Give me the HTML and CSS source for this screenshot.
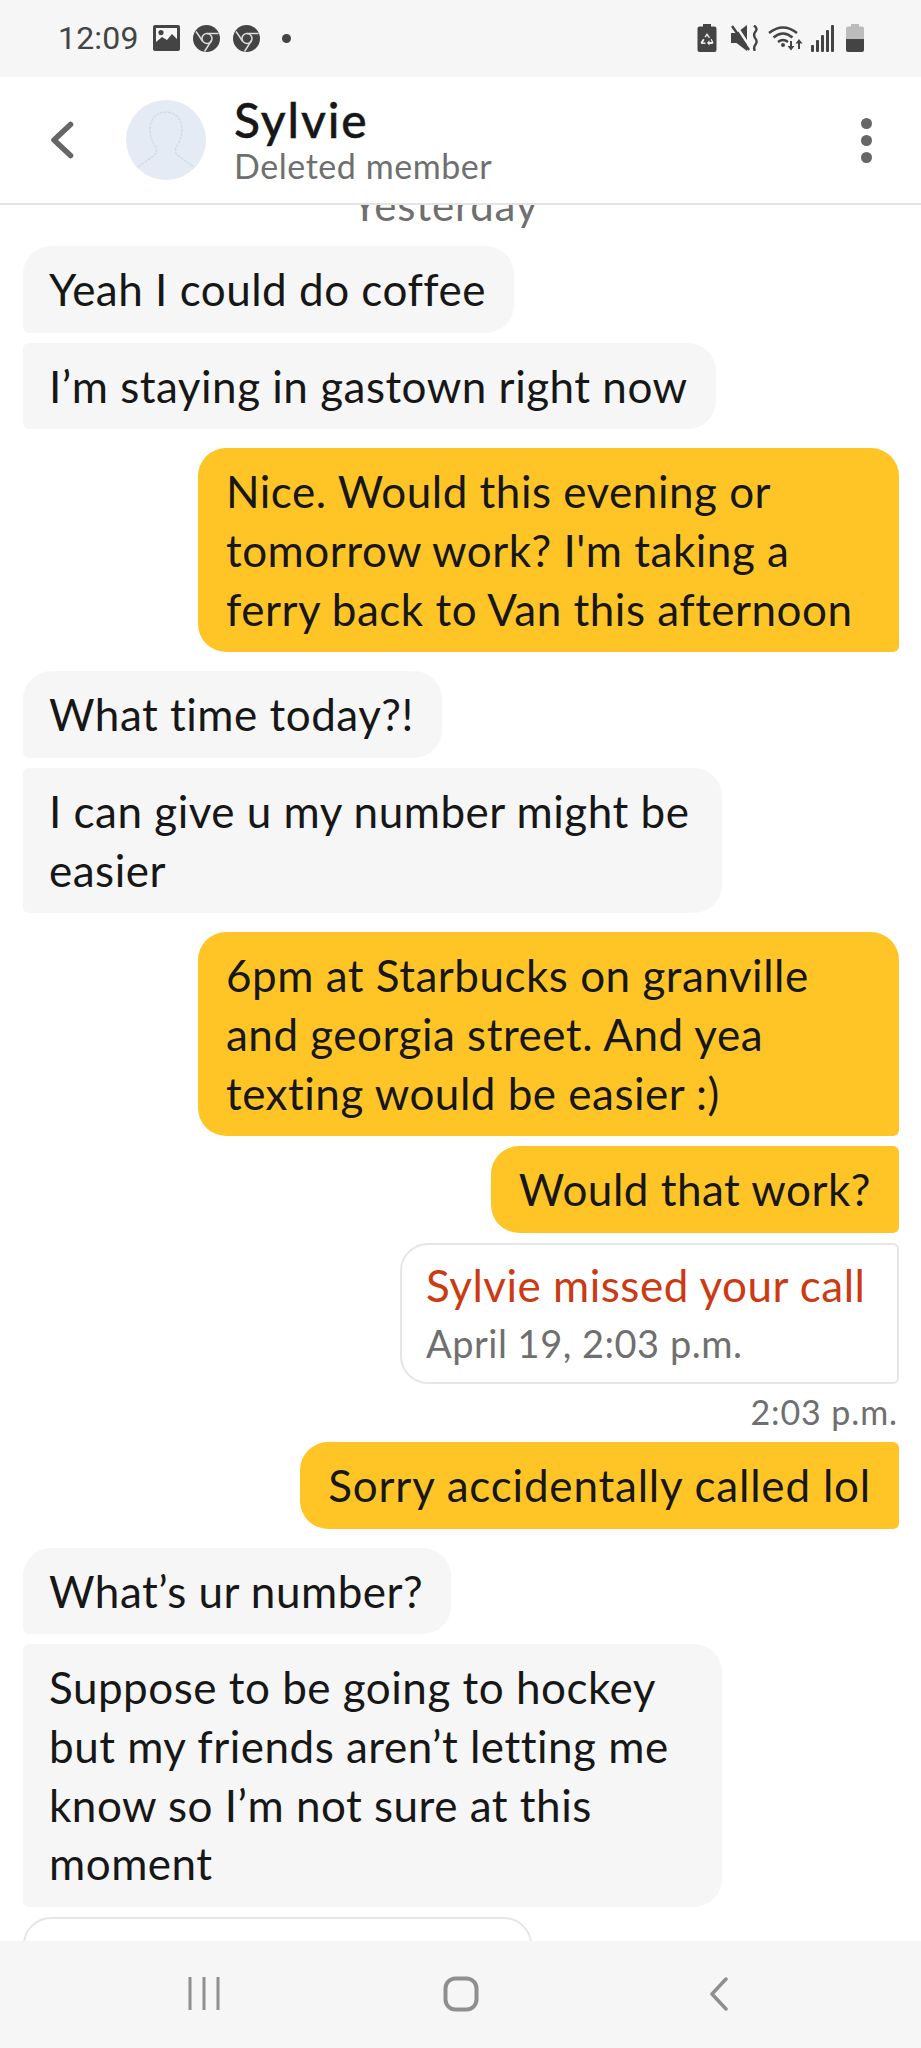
FILE: index.html
```html
<!DOCTYPE html>
<html lang="en">
<head>
<meta charset="utf-8">
<title>Sylvie</title>
<link rel="stylesheet" href="styles.css">
</head>
<body>
<div class="phone">
  <div class="status">
    <div class="status-left">
      <span class="clock">12:09</span>
      <svg class="si" width="27" height="26" viewBox="0 0 27 26"><path fill="#444" fill-rule="evenodd" d="M2 0h23a2 2 0 0 1 2 2v22a2 2 0 0 1-2 2H2a2 2 0 0 1-2-2V2a2 2 0 0 1 2-2zM3 3v14l6-5 5 3 5-6 5 5V3zM8 5a2.600 2.600 0 1 1 0 5.200A2.600 2.600 0 0 1 8 5z"/></svg>
      <svg class="si" width="27" height="27" viewBox="0 0 27 27"><circle cx="13.500" cy="13.500" r="13.500" fill="#444"/><circle cx="14" cy="13.500" r="5" fill="#444" stroke="#ddd" stroke-width="1.500"/><path d="M3 6.500l6.500 9.500M14 8.500h11.500M18.500 15.500l-7 11" stroke="#ddd" stroke-width="1.500" fill="none"/></svg>
      <svg class="si" width="27" height="27" viewBox="0 0 27 27"><circle cx="13.500" cy="13.500" r="13.500" fill="#444"/><circle cx="14" cy="13.500" r="5" fill="#444" stroke="#ddd" stroke-width="1.500"/><path d="M3 6.500l6.500 9.500M14 8.500h11.500M18.500 15.500l-7 11" stroke="#ddd" stroke-width="1.500" fill="none"/></svg>
      <span class="dot"></span>
    </div>
    <div class="status-right">
      <svg class="sr-a" width="20" height="28" viewBox="0 0 20 28"><path fill="#444" d="M6 0h8v2.500h3.500a2 2 0 0 1 2 2V26a2 2 0 0 1-2 2H2.500a2 2 0 0 1-2-2V4.500a2 2 0 0 1 2-2H6z"/><path fill="#eee" d="M10 9l3 4.500-1.200.7-1.800-2.700-1.300 2-1.200-.8zM14.500 14.800l2 3.600-1 1.600h-3v1.800L10 18.800l2.500-2.600v1.800h2.300l-1.200-2.400zM6 14.800l1.600 1-1.700 2.600h2.600V20H4.500l-1-1.600z"/></svg>
      <svg class="sr-b" width="27" height="26" viewBox="0 0 27 26"><path fill="#444" d="M0 8h5.500L16 0v26L5.500 18H0z"/><path stroke="#f6f6f6" stroke-width="2.500" d="M4 -1l17 26"/><path stroke="#444" stroke-width="2.500" d="M1 1l17 24"/><path fill="none" stroke="#444" stroke-width="2.400" d="M23 .5q4 3 1.500 6T24 13q3 3 .5 6.500T24 26"/></svg>
      <svg class="sr-c" width="35" height="26" viewBox="0 0 35 26"><path fill="none" stroke="#444" stroke-width="2.400" d="M1 8Q15-3 29 8M5.500 12.500Q15 4.500 24.500 12.500M10 17Q15 13 20 17"/><circle cx="15" cy="20" r="2" fill="#444"/><path fill="#444" d="M22 16h2v5h2.500L23 25.500 19.500 21H22zM31 14l3.500 4.500H32V24h-2v-5.500h-2.500z"/></svg>
      <svg class="sr-d" width="23" height="27" viewBox="0 0 23 27"><g fill="#444"><rect x="0" y="20" width="3" height="7" rx="1"/><rect x="5" y="15" width="3" height="12" rx="1"/><rect x="10" y="10" width="3" height="17" rx="1"/><rect x="15" y="5" width="3" height="22" rx="1"/><rect x="20" y="0" width="3" height="27" rx="1"/></g></svg>
      <svg class="sr-e" width="18" height="28" viewBox="0 0 18 28"><path fill="#bcbcbc" d="M5 0h8v2.500h3a2 2 0 0 1 2 2V15H0V4.500a2 2 0 0 1 2-2h3z"/><path fill="#444" d="M0 15h18v11a2 2 0 0 1-2 2H2a2 2 0 0 1-2-2z"/></svg>
    </div>
  </div>

  <header class="top">
    <svg class="back" width="24" height="38" viewBox="0 0 24 38"><path d="M20.500 3.500L4 19l16.500 15.500" fill="none" stroke="#666" stroke-width="5.500" stroke-linecap="round" stroke-linejoin="round"/></svg>
    <div class="avatar">
      <svg width="80" height="80" viewBox="0 0 80 80"><path d="M12 67l14-10q6-3 4-10-5-6-6-16 0-18 16-19 16 1 16 19-1 10-6 16-2 7 4 10l14 10" fill="none" stroke="#d3d8df" stroke-width="1.200" stroke-dasharray="3 1"/></svg>
    </div>
    <div class="who">
      <div class="name">Sylvie</div>
      <div class="sub">Deleted member</div>
    </div>
    <div class="more"><i></i><i></i><i></i></div>
  </header>

  <main class="chat">
    <div class="day">Yesterday</div>
    <div class="msg in head">Yeah I could do coffee</div>
    <div class="msg in end">I’m staying in gastown right now</div>
    <div class="msg out round end">Nice. Would this evening or tomorrow work? I'm taking a ferry back to Van this afternoon</div>
    <div class="msg in head">What time today?!</div>
    <div class="msg in end">I can give u my number might be easier</div>
    <div class="msg out round">6pm at Starbucks on granville and georgia street. And yea texting would be easier :)</div>
    <div class="msg out">Would that work?</div>
    <div class="call">
      <div class="call-title">Sylvie missed your call</div>
      <div class="call-time">April 19, 2:03 p.m.</div>
    </div>
    <div class="stamp">2:03 p.m.</div>
    <div class="msg out end loose">Sorry accidentally called lol</div>
    <div class="msg in head">What’s ur number?</div>
    <div class="msg in">Suppose to be going to hockey but my friends aren’t letting me know so I’m not sure at this moment</div>
    <div class="partial"></div>
  </main>

  <nav class="nav">
    <svg width="32" height="33" viewBox="0 0 32 33"><path d="M2 0v33M16 0v33M30 0v33" stroke="#8f8f8f" stroke-width="3" fill="none"/></svg>
    <svg width="36" height="36" viewBox="0 0 36 36"><rect x="2.500" y="2.500" width="31" height="31" rx="10" fill="none" stroke="#8f8f8f" stroke-width="4"/></svg>
    <svg width="21" height="34" viewBox="0 0 21 34"><path d="M18 2L4 17l14 15" fill="none" stroke="#8f8f8f" stroke-width="3.500" stroke-linecap="round" stroke-linejoin="round"/></svg>
  </nav>
</div>
</body>
</html>
```
FILE: styles.css
```css
* { box-sizing: border-box; }
html, body { margin: 0; padding: 0; }
body { background: #fff; font-family: "Lato", "Liberation Sans", sans-serif; color: #171717; font-variant-ligatures: none; }
.phone { width: 921px; height: 2048px; display: flex; flex-direction: column; overflow: hidden; }

.status { flex: 0 0 77px; background: #f6f6f6; display: flex; justify-content: space-between; align-items: center; padding: 0 57px 1px 58px; }
.status-left { display: flex; align-items: center; }
.clock { font-family: "Roboto", sans-serif; font-size: 32px; letter-spacing: .2px; color: #444; margin-right: 14px; }
.si { margin-right: 13px; }
.dot { width: 9px; height: 9px; border-radius: 50%; background: #444; margin-left: 9px; }
.status-right { display: flex; align-items: center; }
.sr-b { margin-left: 14px; }
.sr-c { margin-left: 10px; }
.sr-d { margin-left: 8px; }
.sr-e { margin-left: 12px; }

.top { flex: 0 0 128px; display: flex; align-items: center; padding: 0 49px 0 50px; border-bottom: 2px solid #e4e4e4; position: relative; z-index: 1; background: #fff; }
.back { margin-right: 52px; }
.avatar { width: 80px; height: 80px; border-radius: 50%; background: #e4ebf4; flex: none; margin-right: 28px; }
.avatar svg { display: block; }
.who { flex: 1; }
.name { font-size: 48px; line-height: 52px; font-weight: 500; letter-spacing: 1.9px; -webkit-text-stroke: .4px #171717; color: #171717; }
.sub { font-size: 34px; line-height: 40px; letter-spacing: .55px; color: #6f6f6f; }
.more { display: flex; flex-direction: column; gap: 6px; }
.more i { width: 11px; height: 11px; border-radius: 50%; background: #666; display: block; }

.chat { flex: 1; min-height: 0; overflow: hidden; display: flex; flex-direction: column; align-items: flex-start; padding: 0 22px 0 23px; margin-top: -25px; font-size: 44px; letter-spacing: .5px; line-height: 58.670px; }
.chat > * { flex: none; }
.day { align-self: center; margin-right: 32px; font-size: 42px; letter-spacing: .8px; line-height: 50px; height: 66px; color: #6f6f6f; }
.msg { padding: 14px 28px 14px 26px; background: #f6f6f6; border-radius: 6px 28px 28px 6px; margin-bottom: 10px; max-width: 699px; }
.msg.head { border-top-left-radius: 28px; }
.msg.out { align-self: flex-end; background: #ffc527; border-radius: 28px 6px 6px 28px; max-width: 701px; padding-left: 28px; }
.msg.out.round { border-top-right-radius: 28px; }
.msg.end { margin-bottom: 19px; }
.msg.loose { letter-spacing: .8px; }
.call { align-self: flex-end; width: 499px; height: 141px; padding: 11px 24px; border: 2px solid #e6e6e6; border-radius: 28px 6px 6px 28px; background: #fff; white-space: nowrap; }
.call-title { color: #cc3a14; }
.call-time { font-size: 38px; letter-spacing: .5px; margin-top: -1px; color: #6f6f6f; }
.stamp { align-self: flex-end; font-size: 34px; letter-spacing: .9px; line-height: 40px; margin: 8px 1px 10px 0; color: #6f6f6f; }
.partial { width: 509px; height: 80px; border: 2px solid #e6e6e6; border-radius: 28px 28px 0 0; background: #fff; }

.nav { flex: 0 0 107px; background: #f6f6f6; display: flex; align-items: flex-start; padding: 35px 0 0 188px; }
.nav svg:nth-child(1) { margin-right: 223px; margin-top: 1px; }
.nav svg:nth-child(2) { margin-right: 229px; }
.nav svg:nth-child(3) { margin-top: 1px; }
```
